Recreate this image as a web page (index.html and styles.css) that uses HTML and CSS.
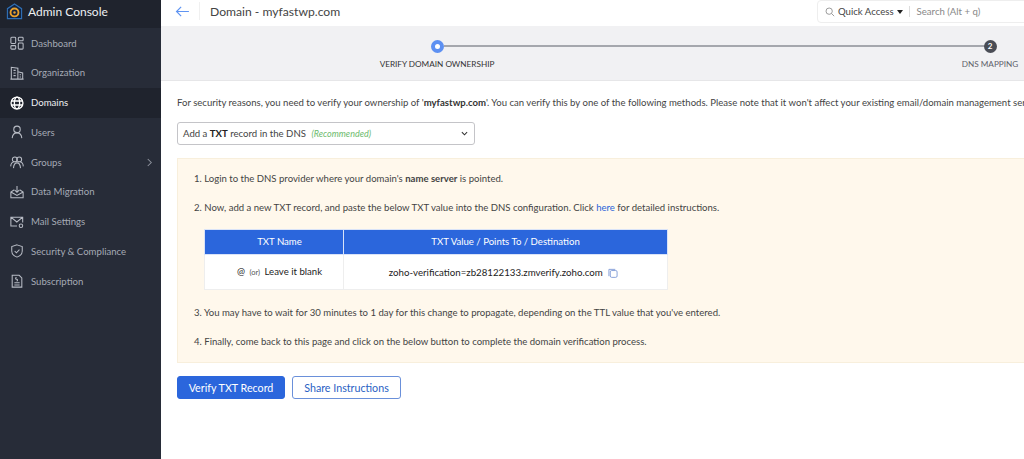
FILE: index.html
```html
<!DOCTYPE html>
<html lang="en">
<head>
<meta charset="utf-8">
<title>Admin Console</title>
<link rel="stylesheet" href="styles.css">
</head>
<body>
<div class="app">
  <aside class="sidebar">
    <div class="brand">
      <svg class="brand-icon" viewBox="0 0 18 18" width="17" height="17"><path d="M9 1 L16.500 6 V16.500 H1.500 V6 Z" fill="#12233f" stroke="#2f6fb5" stroke-width="1.200"/><circle cx="9" cy="10" r="4.200" fill="none" stroke="#e8a02c" stroke-width="2"/><circle cx="9" cy="10" r="1.300" fill="#e8a02c"/></svg>
      <span>Admin Console</span>
    </div>
    <nav class="nav">
      <a class="nav-item"><svg class="ico" viewBox="0 0 16 16"><rect x="1" y="1.500" width="5.500" height="7" rx="1"/><rect x="9.500" y="1.500" width="5.500" height="4" rx="1"/><rect x="1" y="11" width="5.500" height="4" rx="1"/><rect x="9.500" y="8" width="5.500" height="7" rx="1"/></svg><span>Dashboard</span></a>
      <a class="nav-item"><svg class="ico" viewBox="0 0 16 16"><path d="M1.500 15V1.500L9 2.500V15M9 6.500l5.500 1.500V15M.5 15h15M4 5h2.500M4 8h2.500M4 11h2.500M11 10h1.500M11 12.500h1.500"/></svg><span>Organization</span></a>
      <a class="nav-item active"><svg class="ico globe" viewBox="0 0 16 16"><circle cx="8" cy="8" r="6.800"/><ellipse cx="8" cy="8" rx="3" ry="6.800"/><path d="M1.500 5.700h13M1.500 10.300h13"/></svg><span>Domains</span></a>
      <a class="nav-item"><svg class="ico" viewBox="0 0 16 16"><circle cx="8" cy="5" r="3.700"/><path d="M2.500 15c.3-3.600 2.500-6 5.500-6s5.200 2.400 5.500 6"/></svg><span>Users</span></a>
      <a class="nav-item"><svg class="ico" viewBox="0 0 16 16"><circle cx="5.500" cy="5" r="2.800"/><circle cx="10.500" cy="5" r="2.800"/><path d="M.8 13c.2-3 1.700-5 4-5.200M15.200 13c-.2-3-1.700-5-4-5.200M4 15c.2-3.500 1.800-6 4-6s3.800 2.500 4 6"/></svg><span>Groups</span><svg class="chev" viewBox="0 0 8 10"><path d="M2 1l4 4-4 4"/></svg></a>
      <a class="nav-item"><svg class="ico" viewBox="0 0 16 16"><path d="M5 5.500 1 8v6.500h14V8l-4-2.500M1 8l7 4 7-4M8 1v7M5.500 5.800 8 8.300l2.500-2.500"/></svg><span>Data Migration</span></a>
      <a class="nav-item"><svg class="ico" viewBox="0 0 16 16"><path d="M8 12.500H1V2.500h13.500v6M1 2.500l6.800 5.500 6.700-5.500"/><circle cx="12.500" cy="12.300" r="2"/></svg><span>Mail Settings</span></a>
      <a class="nav-item"><svg class="ico" viewBox="0 0 16 16"><path d="M8 1l6 2v5c0 3.500-2.500 5.800-6 7-3.500-1.200-6-3.500-6-7V3zM5.300 8l2 2 3.500-3.500"/></svg><span>Security &amp; Compliance</span></a>
      <a class="nav-item"><svg class="ico" viewBox="0 0 16 16"><path d="M2.500 15V1.500h8l3 3V15zM5 12.500h6M5 10h6M7.500 4c-1.500 0-1.500 2 0 2s1.500 2 0 2"/></svg><span>Subscription</span></a>
    </nav>
  </aside>
  <main class="main">
    <header class="topbar">
      <svg class="back" viewBox="0 0 16 12" width="15" height="11"><path d="M15 6H1.500M6.500 1 1.500 6l5 5"/></svg>
      <span class="divider"></span>
      <h1 class="title">Domain - myfastwp.com</h1>
      <div class="search">
        <svg class="search-ico" viewBox="0 0 12 12" width="10" height="10"><circle cx="5" cy="5" r="3.800"/><path d="M8 8l3 3"/></svg>
        <span class="qa">Quick Access</span><span class="caret"></span>
        <span class="search-sep"></span>
        <span class="search-ph">Search (Alt + q)</span>
      </div>
    </header>
    <section class="steps">
      <div class="step">
        <span class="dot current"></span>
        <span class="step-label strong">VERIFY DOMAIN OWNERSHIP</span>
      </div>
      <span class="track"></span>
      <div class="step">
        <span class="dot num">2</span>
        <span class="step-label">DNS MAPPING</span>
      </div>
    </section>
    <section class="content">
      <p class="intro">For security reasons, you need to verify your ownership of '<b>myfastwp.com</b>'. You can verify this by one of the following methods. Please note that it won't affect your existing email/domain management services.</p>
      <div class="select">
        <span>Add a <b>TXT</b> record in the DNS <em>(Recommended)</em></span>
        <svg class="select-chev" viewBox="0 0 8 5" width="7" height="5"><path d="M1 1l3 3 3-3"/></svg>
      </div>
      <div class="notice">
        <p>1. Login to the DNS provider where your domain's <b>name server</b> is pointed.</p>
        <p>2. Now, add a new TXT record, and paste the below TXT value into the DNS configuration. Click <a class="link">here</a> for detailed instructions.</p>
        <table class="records">
          <thead><tr><th class="c1">TXT Name</th><th>TXT Value / Points To / Destination</th></tr></thead>
          <tbody><tr>
            <td class="c1">@ <small>(or)</small> Leave it blank</td>
            <td class="value">zoho-verification=zb28122133.zmverify.zoho.com <svg class="copy" viewBox="0 0 11 11" width="10" height="10"><path d="M1 9V1.500h7"/><rect x="2.500" y="2.800" width="7.500" height="7.500" rx="1.500"/></svg></td>
          </tr></tbody>
        </table>
        <p>3. You may have to wait for 30 minutes to 1 day for this change to propagate, depending on the TTL value that you've entered.</p>
        <p>4. Finally, come back to this page and click on the below button to complete the domain verification process.</p>
      </div>
      <div class="actions">
        <button class="btn primary">Verify TXT Record</button>
        <button class="btn outline">Share Instructions</button>
      </div>
    </section>
  </main>
</div>
</body>
</html>
```
FILE: styles.css
```css
* { box-sizing: border-box; }
html, body { margin: 0; height: 100%; overflow: hidden; }
body { font-family: Lato, "Open Sans", sans-serif; color: #333; background: #fff; }
.app { display: flex; width: 1024px; height: 459px; overflow: hidden; }

.sidebar { flex: 0 0 161px; background: #272c38; color: #a5aab5; }
.brand { height: 28.300px; display: flex; align-items: center; gap: 5px; padding: 0 0 5px 6px; background: #1f232d; color: #eef0f3; font-size: 12px; }
.brand-icon { flex: none; }
.nav { display: flex; flex-direction: column; }
.nav-item { height: 29.750px; display: flex; align-items: center; padding: 0 10px; font-size: 9.600px; }
.nav-item span { margin-left: 7px; }
.nav-item.active { background: #1f232d; color: #eef0f3; }
.ico { flex: none; width: 14px; height: 14px; fill: none; stroke: #b8bcc5; stroke-width: 1.200; }
.active .ico { stroke: #fff; }
.globe { stroke-width: 1.500; }
.chev { width: 7px; height: 9px; margin-left: auto; margin-right: -2px; fill: none; stroke: #8d929d; stroke-width: 1.200; }

.main { flex: 0 0 1100px; display: flex; flex-direction: column; }
.topbar { height: 26px; display: flex; align-items: center; padding: 0 0 4px 14px; background: #fff; }
.back { flex: none; fill: none; stroke: #5f94f2; stroke-width: 1.300; }
.divider { width: 1px; height: 18px; background: #f0f0f0; margin: 0 10px 0 9px; }
.title { margin: 0; font-size: 12.150px; font-weight: 400; color: #444; }
.search { position: absolute; left: 817px; top: 0; width: 240px; height: 23px; display: flex; align-items: center; padding-left: 7px; background: #fff; border: 1px solid #eee; border-radius: 4px; font-size: 9.600px; }
.search-ico { fill: none; stroke: #888; stroke-width: 1; }
.qa { margin-left: 3px; color: #444; }
.caret { width: 0; height: 0; margin-left: 3px; border: 3.500px solid transparent; border-top: 4px solid #222; border-bottom: 0; }
.search-sep { width: 1px; height: 11px; background: #ddd; margin: 0 7px 0 6px; }
.search-ph { color: #888; }

.steps { height: 55px; display: flex; align-items: flex-start; background: #f1f1f3; border-bottom: 1px solid #e6e6e8; padding-top: 13.500px; padding-left: 200px; }
.step { width: 152px; display: flex; flex-direction: column; align-items: center; gap: 6px; }
.step + .track + .step { margin-left: -76px; }
.dot { width: 13px; height: 13px; border-radius: 50%; }
.dot.current { background: #fff; border: 4.500px solid #5d90f2; }
.dot.num { background: #4a4d55; color: #fff; font-size: 8px; font-weight: 700; line-height: 13px; text-align: center; }
.track { width: 546px; height: 2px; margin: 5.500px 0 0 -69px; background: #a5a7ad; }
.step-label { font-size: 8.200px; color: #5f626a; white-space: nowrap; }
.step-label.strong { color: #333; }

.content { padding: 15px 0 0 16px; }
.intro { margin: 0; font-size: 9.570px; line-height: 13px; white-space: nowrap; color: #444; }
.intro b { color: #333; }
.select { width: 298px; height: 23px; margin-top: 13px; display: flex; align-items: center; justify-content: space-between; padding: 0 6px 0 5px; border: 1px solid #c4c4c8; border-radius: 3px; background: #fff; font-size: 9.600px; color: #444; }
.select b { color: #222; }
.select em { margin-left: 3px; color: #6dbb6d; font-size: 9px; }
.select-chev { fill: none; stroke: #333; stroke-width: 1.200; }

.notice { margin-top: 13px; padding: 12.500px 16px 14px; background: #fff8ec; border: 1px solid #f8efdc; border-right: 0; font-size: 9.570px; color: #444; }
.notice p { margin: 0 0 16px; line-height: 13px; }
.notice p:last-child { margin-bottom: 0; }
.link { color: #2a65d9; }
.records { margin: -1px 0 16px 10px; width: 464px; border-collapse: collapse; background: #fff; font-size: 9.600px; text-align: center; }
.records th { height: 25px; background: #2b66dc; color: #fff; font-weight: 400; border: 1px solid #d9e3f8; }
.records .c1 { width: 139px; padding-left: 12px; }
.records td { height: 35px; border: 1px solid #eee; color: #222; }
.records .value { font-size: 9.700px; padding-right: 5px; }
.records small { font-size: 7.500px; color: #555; margin: 0 2px; }
.copy { margin-left: 3px; vertical-align: -2px; fill: none; stroke: #7f9ad6; stroke-width: 1; }

.actions { margin-top: 13px; display: flex; gap: 7px; }
.btn { height: 23px; padding: 0; border-radius: 3px; font: 400 10.700px Lato, sans-serif; }
.btn.primary { width: 108px; background: #2b66dc; color: #fff; border: 1px solid #2b66dc; }
.btn.outline { width: 109px; background: #fff; color: #2a5fc4; border: 1px solid #6a90da; }
```
